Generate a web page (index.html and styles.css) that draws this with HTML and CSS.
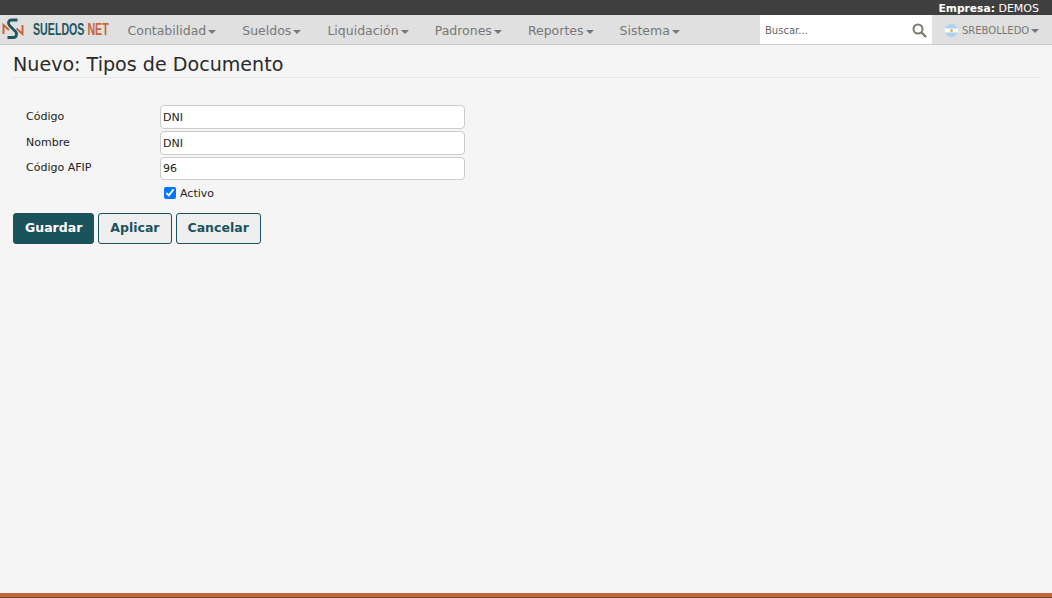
FILE: index.html
```html
<!DOCTYPE html>
<html lang="es">
<head>
<meta charset="utf-8">
<title>Nuevo: Tipos de Documento</title>
<link rel="stylesheet" href="styles.css">
</head>
<body>
<div class="page">
  <div class="topbar"><b>Empresa:</b> DEMOS</div>
  <nav class="navbar">
    <a class="brand">
      <svg class="brand-icon" width="24" height="24" viewBox="0 0 24 24" fill="none">
        <path d="M1.500 16V7L7 12" stroke="#c8653a" stroke-width="2"/>
        <path d="M20.500 7V16L14.500 10.500" stroke="#c8653a" stroke-width="2"/>
        <path d="M15.500 2H9.500C6.500 2 5.500 5.500 7.500 7.500L13.500 13.500C15.500 15.500 14.500 19.500 11.500 19.500H5.500" stroke="#1d5761" stroke-width="2.800"/>
      </svg>
      <span class="brand-text">SUELDOS <em>NET</em></span>
    </a>
    <ul class="menu">
      <li>Contabilidad<i class="caret"></i></li>
      <li>Sueldos<i class="caret"></i></li>
      <li>Liquidación<i class="caret"></i></li>
      <li>Padrones<i class="caret"></i></li>
      <li>Reportes<i class="caret"></i></li>
      <li>Sistema<i class="caret"></i></li>
    </ul>
    <div class="search">
      <span>Buscar...</span>
      <svg width="15" height="15" viewBox="0 0 15 15" fill="none">
        <circle cx="6" cy="6" r="4.500" stroke="#7d7a72" stroke-width="2"/>
        <path d="M9.500 9.500L14 14" stroke="#7d7a72" stroke-width="2.400"/>
      </svg>
    </div>
    <div class="user">
      <svg class="flag" width="13" height="13" viewBox="0 0 13 13">
        <circle cx="6.500" cy="6.500" r="6.500" fill="#a9d3f0"/>
        <rect x="0" y="4.500" width="13" height="4" fill="#fff"/>
        <circle cx="6.500" cy="6.500" r="1.500" fill="#eeb04e"/>
      </svg>
      <span>SREBOLLEDO</span><i class="caret"></i>
    </div>
  </nav>
  <main class="content">
    <h1 class="title">Nuevo: Tipos de Documento</h1>
    <form class="form">
      <div class="row"><label>Código</label><input type="text" value="DNI"></div>
      <div class="row"><label>Nombre</label><input type="text" value="DNI"></div>
      <div class="row row-short"><label>Código AFIP</label><input type="text" value="96"></div>
      <label class="check"><input type="checkbox" checked>Activo</label>
      <div class="actions">
        <button type="button" class="btn primary">Guardar</button>
        <button type="button" class="btn">Aplicar</button>
        <button type="button" class="btn">Cancelar</button>
      </div>
    </form>
  </main>
  <footer class="footer"></footer>
</div>
</body>
</html>
```
FILE: styles.css
```css
* { box-sizing: border-box; }
html, body { margin: 0; height: 100%; }
body { background: #f5f5f5; color: #222; font-family: "DejaVu Sans", Verdana, sans-serif; font-size: 11px; overflow: hidden; }
.page { height: 598px; display: flex; flex-direction: column; }
.topbar { height: 15px; background: #3f3f3f; color: #fff; text-align: right; padding-right: 13px; font-size: 11px; line-height: 17px; }
.topbar b { font-size: 10.700px; }
.navbar { height: 30px; background: #e0e0e0; border-bottom: 1px solid #ccc; display: flex; align-items: stretch; }
.brand { width: 114px; flex: none; display: flex; align-items: center; padding-left: 2px; gap: 7px; }
.brand-icon { flex: none; }
.brand-text { display: inline-block; font-family: "Liberation Sans", sans-serif; font-weight: 700; font-size: 16.500px; color: #1d5761; white-space: nowrap; transform: scaleX(0.645); transform-origin: left center; }
.brand-text em { font-style: normal; color: #c8653a; }
.menu { list-style: none; margin: 0; padding: 0 0 0 0.500px; display: flex; flex: 1; color: #777; font-size: 12.500px; }
.menu li { padding: 0 13px; line-height: 31px; white-space: nowrap; }
.caret { display: inline-block; width: 0; height: 0; margin-left: 2px; vertical-align: middle; border-top: 4px solid #777; border-left: 4px solid transparent; border-right: 4px solid transparent; }
.search { width: 172px; flex: none; background: #fff; display: flex; align-items: center; justify-content: space-between; padding: 1px 5px 0 5px; color: #666; font-size: 10px; }
.user { width: 120px; flex: none; display: flex; align-items: center; padding: 2px 0 0 13px; color: #777; font-size: 10px; }
.flag { margin-right: 4px; flex: none; }
.content { flex: 1; padding: 8px 13px 0; }
.title { margin: 0; height: 25px; border-bottom: 1px solid #e3e3e3; font-size: 19.100px; font-weight: 400; line-height: 23px; color: #2a2a2a; }
.form { padding-top: 27px; }
.row { display: flex; height: 26px; }
.row label { width: 147px; padding-left: 13px; line-height: 24px; }
.row input { width: 305px; height: 24px; border: 1px solid #ccc; border-radius: 4px; background: #fff; padding: 0 2px; font: 11px "DejaVu Sans", Verdana, sans-serif; color: #222; }
.row-short label { line-height: 22px; }
.row-short input { height: 23px; }
.check { display: flex; align-items: center; height: 20px; margin-left: 151px; margin-top: -1px; padding-top: 2px; }
.check input { margin: 0 4px 0 0; width: 12px; height: 12px; accent-color: #0075ff; }
.actions { display: flex; gap: 4px; margin-top: 11px; }
.btn { height: 31px; padding: 0 11px 2px; border: 1px solid #1a535c; border-radius: 3px; background: #eee; color: #1a535c; font: 700 12.500px "DejaVu Sans", Verdana, sans-serif; }
.btn.primary { background: #1a535c; color: #fff; }
.footer { height: 5px; background: #c8633a; border-bottom: 1px solid #5a4a40; }
```
